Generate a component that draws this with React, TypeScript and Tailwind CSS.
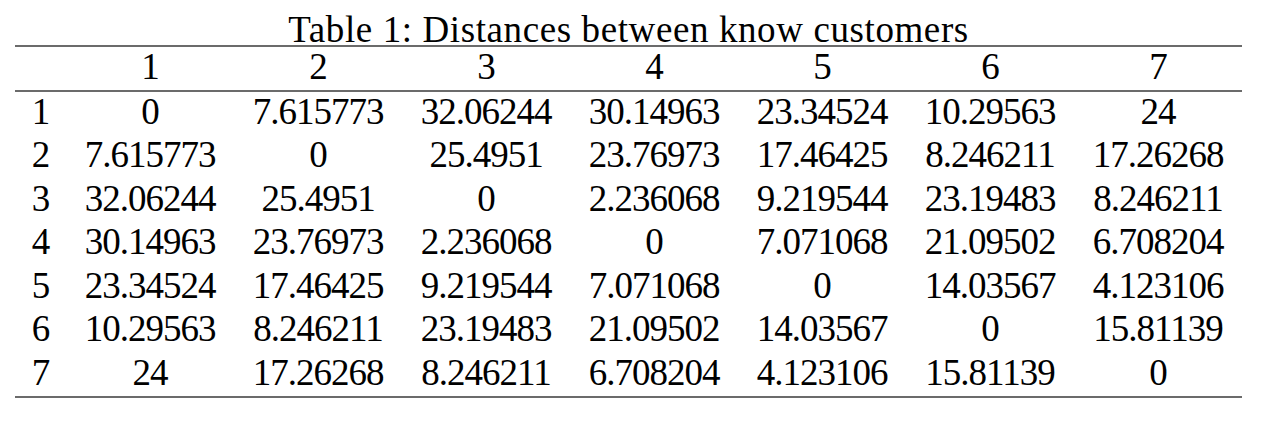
const rows: string[][] = [
  ["0", "7.615773", "32.06244", "30.14963", "23.34524", "10.29563", "24"],
  ["7.615773", "0", "25.4951", "23.76973", "17.46425", "8.246211", "17.26268"],
  ["32.06244", "25.4951", "0", "2.236068", "9.219544", "23.19483", "8.246211"],
  ["30.14963", "23.76973", "2.236068", "0", "7.071068", "21.09502", "6.708204"],
  ["23.34524", "17.46425", "9.219544", "7.071068", "0", "14.03567", "4.123106"],
  ["10.29563", "8.246211", "23.19483", "21.09502", "14.03567", "0", "15.81139"],
  ["24", "17.26268", "8.246211", "6.708204", "4.123106", "15.81139", "0"],
];

const cols = ["1", "2", "3", "4", "5", "6", "7"];

function Rule() {
  return <div className="h-[2px] bg-[#6b6b6b]" />;
}

function Row({ label, cells, height }: { label: string; cells: string[]; height: string }) {
  return (
    <div className={`grid grid-cols-[51px_repeat(7,168px)] ${height}`}>
      <div className="text-center">{label}</div>
      {cells.map((c, i) => (
        <div key={i} className="text-center">
          {c}
        </div>
      ))}
    </div>
  );
}

export default function App() {
  return (
    <div className="w-[1262px] h-[426px] bg-white text-black font-['Liberation_Serif',serif] text-[37px] tracking-[-1px] leading-[39px]">
      <div className="ml-[15px] w-[1227px]">
        {/* caption */}
        <div className="h-[45px] pt-[14px] text-center leading-[31px] tracking-[0.6px] whitespace-nowrap">
          Table 1: Distances between know customers
        </div>
        <Rule />
        <Row label="" cells={cols} height="h-[43px]" />
        <Rule />
        {rows.map((r, i) => (
          <Row key={i} label={String(i + 1)} cells={r} height="h-[43.43px]" />
        ))}
        <Rule />
      </div>
    </div>
  );
}
